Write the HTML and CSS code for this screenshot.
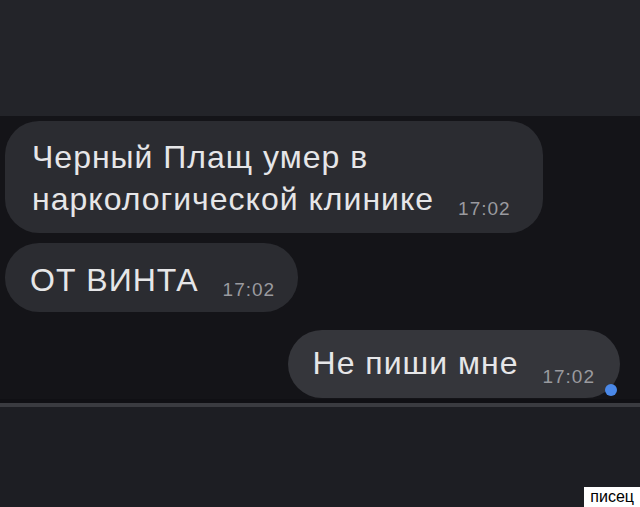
FILE: index.html
```html
<!DOCTYPE html>
<html lang="ru">
<head>
    <meta charset="UTF-8">
    <meta name="viewport" content="width=device-width, initial-scale=1.0">
    <title>Черный Плащ</title>
    <link rel="stylesheet" href="styles.css">
</head>
<body>
    <div class="top"></div>

    <div class="chat">
        <!-- входящие -->
        <div class="msg in first">
            Черный Плащ умер в<br>наркологической клинике<span class="time">17:02</span>
        </div>
        <div class="msg in second">
            ОТ ВИНТА<span class="time">17:02</span>
        </div>

        <!-- исходящее -->
        <div class="msg out">
            Не пиши мне<span class="time">17:02</span>
            <span class="dot"></span>
        </div>
    </div>

    <div class="divider"></div>
    <div class="bottom">
        <span class="mark">писец</span>
    </div>
</body>
</html>
```

FILE: styles.css
```css
body {
    margin: 0;
    background: #1d1e23;
    font-family: "Liberation Sans", Arial, sans-serif;
}
.top {
    height: 116px;
    background: #232429;
}
.chat {
    height: 283px;
    background: #141418;
    display: flex;
    flex-direction: column;
    align-items: flex-start;
    padding: 5px 0 0 5px;
    box-sizing: border-box;
    overflow: hidden;
}
.msg {
    position: relative;
    background: #2b2c31;
    color: #e6e6e8;
    font-size: 32px;
    letter-spacing: 1px;
    line-height: 42px;
    border-radius: 34px;
    box-sizing: border-box;
}
.msg.first {
    width: 538px;
    padding: 15px 20px 13px 27px;
}
.msg.second {
    margin-top: 10px;
    padding: 16px 23px 11px 25px;
}
.msg.out {
    align-self: flex-end;
    margin: 18px 20px 0 0;
    background: #35363b;
    padding: 12px 25px 14px 25px;
}
.time {
    position: relative;
    top: 5px;
    font-size: 19px;
    line-height: 1;
    letter-spacing: 1px;
    color: #9a9a9f;
    margin-left: 24px;
}
.out .time {
    top: 9px;
}
.dot {
    position: absolute;
    right: 3px;
    bottom: 2px;
    width: 12px;
    height: 12px;
    border-radius: 50%;
    background: #4a88e8;
}
.divider {
    height: 4px;
    border-top: 4px solid #101014;
    background: #3a3b40;
}
.bottom {
    position: relative;
    height: 100px;
}
.mark {
    position: absolute;
    right: 0;
    bottom: 0;
    background: #fff;
    color: #000;
    font-size: 16px;
    line-height: 20px;
    padding: 0 6px 0 6px;
}
```
